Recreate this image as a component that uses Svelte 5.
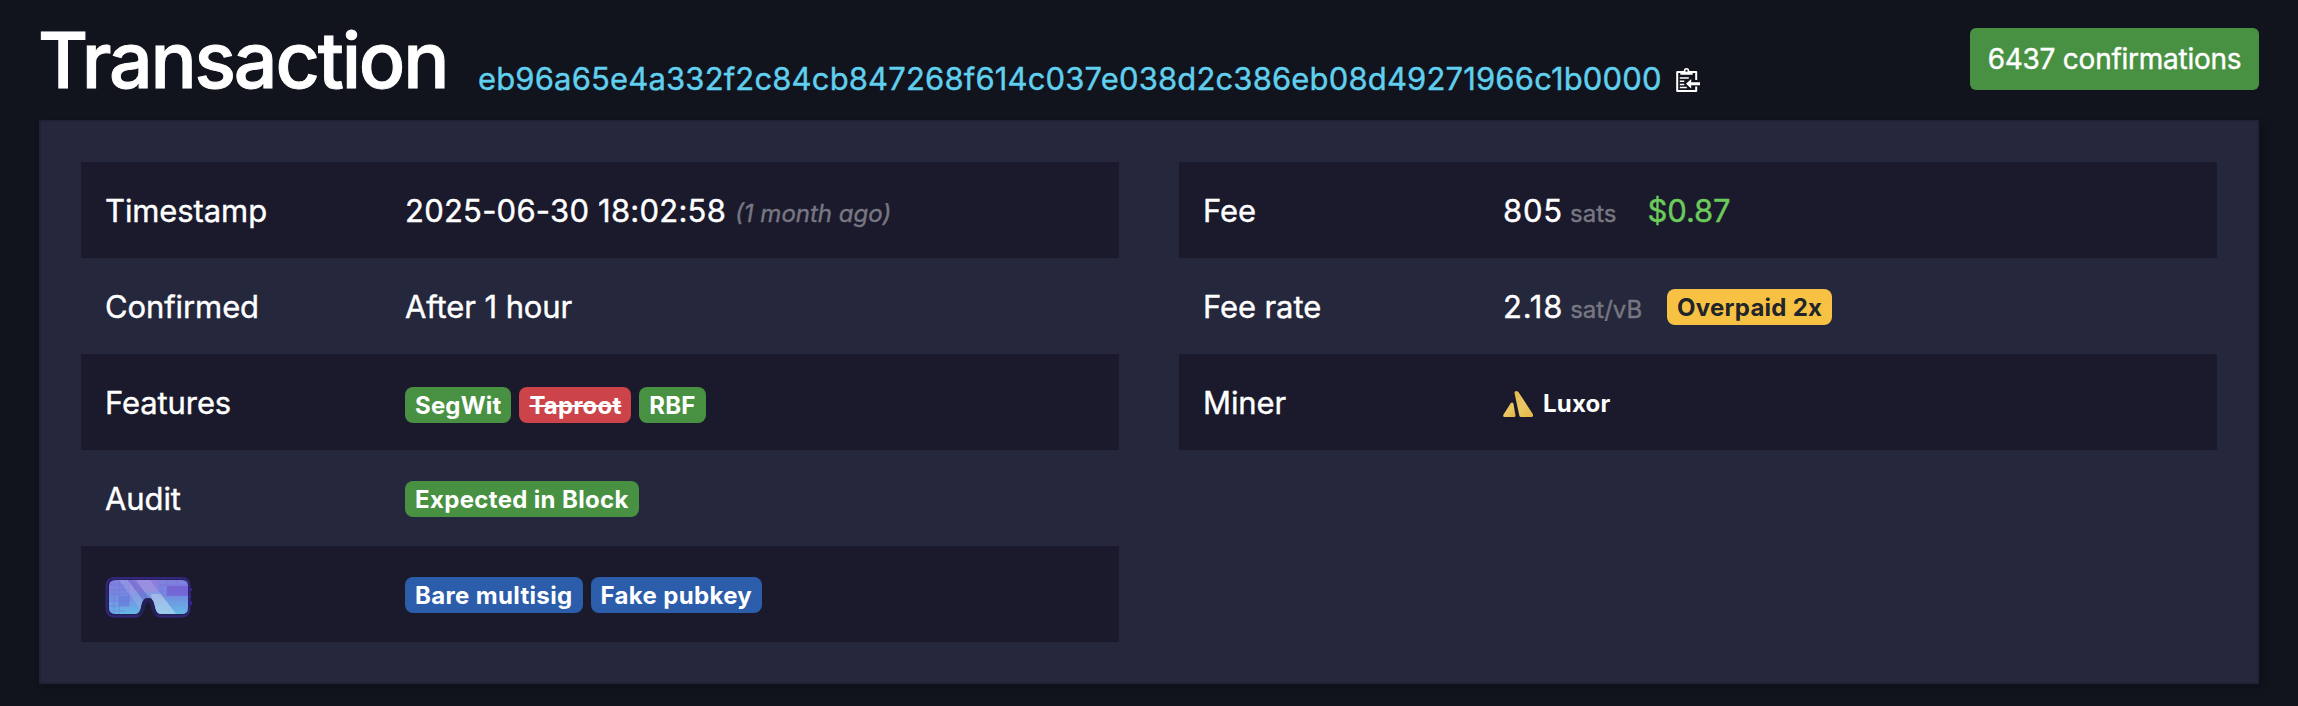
<script>
  const left = [
    { label: 'Timestamp', kind: 'time' },
    { label: 'Confirmed', kind: 'text', text: 'After 1 hour' },
    { label: 'Features', kind: 'badges', low: true, badges: [['SegWit', 'green'], ['Taproot', 'red'], ['RBF', 'green']] },
    { label: 'Audit', kind: 'badges', badges: [['Expected in Block', 'green']] },
    { label: '', kind: 'badges', goggles: true, badges: [['Bare multisig', 'blue'], ['Fake pubkey', 'blue']] }
  ];
</script>

<main>
  <header>
    <h1>Transaction</h1>
    <div class="txid">
      <a href="#tx">eb96a65e4a332f2c84cb847268f614c037e038d2c386eb08d49271966c1b0000</a>
      <svg class="clip" viewBox="0 0 24 26" width="24" height="26" fill="none">
        <path d="M20.2 13V4.9H1.2V24h19v-4.500" stroke="#fff" stroke-width="2" stroke-linejoin="round" />
        <path d="M4.300 7.700V5.200h3.200C7.500 2.500 8.500 1 10.500 1s3 1.500 3 4.200h3.200v2.500z" fill="#fff" />
        <rect x="9.500" y="2.700" width="2" height="2" fill="#11131d" />
        <path d="M3.800 11h9M3.800 14.300h4.500M3.800 17.600h4.500M3.800 20.600h7" stroke="#fff" stroke-width="1.500" />
        <path d="M10 16.700l5.200-4.600v3.200H24v2.900h-8.800v3.300z" fill="#fff" />
      </svg>
    </div>
    <button>6437 confirmations</button>
  </header>

  <section>
    <div class="table">
      {#each left as row}
        <div class="row">
          <div class="label">
            {#if row.goggles}
              <svg class="goggles" viewBox="0 0 90 44" width="90" height="44">
                <defs>
                  <linearGradient id="sky" x1="0" y1="0" x2="0" y2="1">
                    <stop offset="0" stop-color="#8080dd" />
                    <stop offset=".45" stop-color="#738ce0" />
                    <stop offset="1" stop-color="#66b8e6" />
                  </linearGradient>
                  <clipPath id="lens">
                    <path d="M11 4H77Q83 4 83 10V32Q83 38 77 38H56Q52 38 50.500 33C49 26 48 22 43 22S37 26 35.500 33Q34 38 30 38H11Q4 38 4 32V10Q4 4 11 4Z" />
                  </clipPath>
                </defs>
                <path d="M83 12h4v3h-4zM83 18h3v4h-3zM83 25h4v4h-4z" fill="#3520a6" />
                <path d="M10 2H76Q84.500 2 84.500 10V32Q84.500 40.500 76 40.500H56Q50 40.500 48 34C46.500 27 46 24 43 24S39.500 27 38 34Q36 40.500 30 40.500H10Q1.500 40.500 1.500 32V10Q1.500 2 10 2Z" fill="#252058" stroke="#35257b" stroke-width="2" />
                <g clip-path="url(#lens)">
                  <rect x="4" y="4" width="79" height="34" fill="url(#sky)" />
                  <rect x="25" y="4" width="28" height="12" fill="#a278dd" opacity=".5" />
                  <rect x="62" y="10" width="21" height="10" fill="#7550d0" opacity=".6" />
                  <rect x="14" y="20" width="10" height="10" fill="#6279dc" opacity=".6" />
                  <path d="M4 9H25M4 14H24M4 18H24M4 25H24M4 30H24M4 35H20M9 12V38M14 4V38M19 4V14M24 4V30M53 9H83M53 15H62M53 20H62M57 9V24M62 4V20M72 4V10" stroke="#8065d9" stroke-width="1" opacity=".45" />
                  <path d="M14 4h9l20 26-4 8z" fill="#b6c4ed" opacity=".3" />
                  <path d="M45 4L71 38H52L48 24 27 4z" fill="#c6ddef" opacity=".2" />
                  <path d="M46 18l10 0 15 20H50z" fill="#c6ddef" opacity=".45" />
                  <path d="M23 4h8l16 22h-8z" fill="#6869c9" opacity=".5" />
                </g>
                <path d="M33 39Q35 37 36.200 32C37.500 25 38.500 22 43 22S48.500 25 49.800 32Q51 37 53 39L50 40Q48 38 47 34H39Q38 38 36 40Z" fill="#252058" />
                <path d="M38 40.500Q39.500 36 40 31Q41 26.500 43 26.500T46 31Q46.500 36 48 40.500V43H38Z" fill="#1a1a2c" />
              </svg>
            {:else}{row.label}{/if}
          </div>
          <div class="value">
            {#if row.kind === 'time'}
              <span class="date">2025-06-30 18:02:58</span><i>(1 month ago)</i>
            {:else if row.kind === 'text'}
              <span class="after">{row.text}</span>
            {:else}
              <div class="badges" class:low={row.low}>
                {#each row.badges as [name, tone]}<span class="badge {tone}">{name}</span>{/each}
              </div>
            {/if}
          </div>
        </div>
      {/each}
    </div>

    <div class="table">
      <div class="row">
        <div class="label">Fee</div>
        <div class="value amount"><span class="num">805</span><small>sats</small><span class="fiat">$0.87</span></div>
      </div>
      <div class="row">
        <div class="label">Fee rate</div>
        <div class="value amount"><span class="num">2.18</span><small>sat/vB</small><span class="badge yellow">Overpaid 2x</span></div>
      </div>
      <div class="row">
        <div class="label">Miner</div>
        <div class="value miner">
          <svg class="luxor" viewBox="0 0 32 28" width="32" height="28">
            <defs>
              <linearGradient id="gold" x1="0" y1="0" x2="1" y2="1">
                <stop offset="0" stop-color="#e3b74c" />
                <stop offset=".5" stop-color="#eac966" />
                <stop offset="1" stop-color="#e4b440" />
              </linearGradient>
            </defs>
            <path d="M0.500 24.500L7.700 13.200Q9.500 11.600 10.500 14L12.500 25.500Q12.500 27 11 27H1.500Q-0.500 27 0.500 24.500Z" fill="url(#gold)" />
            <path d="M11.500 3Q11.300 1 13.300 1T15.800 2.500L29.800 24Q30.800 27 28.300 27H18.300Q16.600 27 16.300 25.500Z" fill="url(#gold)" />
          </svg>
          <b>Luxor</b>
        </div>
      </div>
    </div>
  </section>
</main>

<style>
  :global(body) {
    background: #11131d;
  }
  main {
    box-sizing: border-box;
    width: 2298px;
    height: 706px;
    padding: 0 39px;
    overflow: hidden;
    font-family: Inter, "Liberation Sans", sans-serif;
    font-size: 31px;
    font-weight: 400;
    line-height: 48px;
    letter-spacing: -0.100px;
    -webkit-text-stroke: 0.400px;
    color: #fff;
  }
  header {
    display: flex;
    height: 120px;
    align-items: flex-start;
  }
  h1 {
    margin: 12px 0 0 -1px;
    width: 440px;
    font-size: 77px;
    font-weight: 500;
    line-height: 96px;
    letter-spacing: -2.200px;
    -webkit-text-stroke: 1px;
    white-space: nowrap;
  }
  .txid {
    display: flex;
    margin-top: 55px;
  }
  a {
    color: #60d0ee;
    text-decoration: none;
    white-space: nowrap;
    letter-spacing: 0.155px;
  }
  .clip {
    margin: 12px 0 0 14px;
  }
  button {
    margin: 28px 0 0 auto;
    width: 289px;
    height: 62px;
    padding: 0;
    border: 0;
    border-radius: 6px;
    background: #489142;
    color: #fff;
    font: 400 28px/62px Inter, "Liberation Sans", sans-serif;
    letter-spacing: -0.250px;
    -webkit-text-stroke: 0.400px;
    white-space: nowrap;
  }
  section {
    box-sizing: border-box;
    height: 564px;
    padding: 40px;
    border: 2px solid #202236;
    background: #25273c;
    box-shadow: 4px 4px 8px rgba(0, 0, 0, 0.15);
    display: grid;
    grid-template-columns: 1fr 1fr;
    gap: 60px;
  }
  .row {
    box-sizing: border-box;
    display: flex;
    align-items: center;
    height: 96px;
    padding: 2px 0 0 24px;
  }
  .row:nth-child(odd) {
    background: #1a1a2c;
  }
  .label {
    width: 300px;
  }
  .goggles {
    display: block;
    margin-top: 6px;
  }
  .value {
    display: flex;
    align-items: baseline;
    white-space: nowrap;
  }
  .value:has(.date), .amount {
    padding-top: 2px;
  }
  .date {
    letter-spacing: 0.230px;
  }
  i, small {
    margin-left: 9px;
    font-size: 24px;
    color: #777782;
  }
  i {
    letter-spacing: 0;
  }
  .num {
    letter-spacing: 0.800px;
  }
  small {
    margin-left: 7px;
    letter-spacing: 0;
  }
  .fiat {
    margin-left: 31px;
    color: #6ccb5b;
  }
  .badges {
    display: flex;
    gap: 8px;
  }
  .badges.low {
    padding-top: 4px;
  }
  .badge {
    height: 36px;
    padding: 0 10px;
    border-radius: 8px;
    font-size: 24px;
    font-weight: 700;
    line-height: 37px;
    letter-spacing: 0.340px;
    -webkit-text-stroke: 0;
  }
  .low .badge {
    letter-spacing: 0.170px;
  }
  .green { background: #489142; }
  .red { background: #cc444a; text-decoration: line-through; }
  .blue { background: #2b5dab; }
  .yellow {
    position: relative;
    top: -2px;
    margin-left: 25px;
    background: #f7c244;
    color: #212529;
    letter-spacing: 0.250px;
  }
  .miner {
    padding-top: 2px;
  }
  .luxor {
    align-self: center;
    margin-right: 8px;
  }
  b {
    font-size: 24px;
    letter-spacing: 0.200px;
    -webkit-text-stroke: 0;
  }
</style>
